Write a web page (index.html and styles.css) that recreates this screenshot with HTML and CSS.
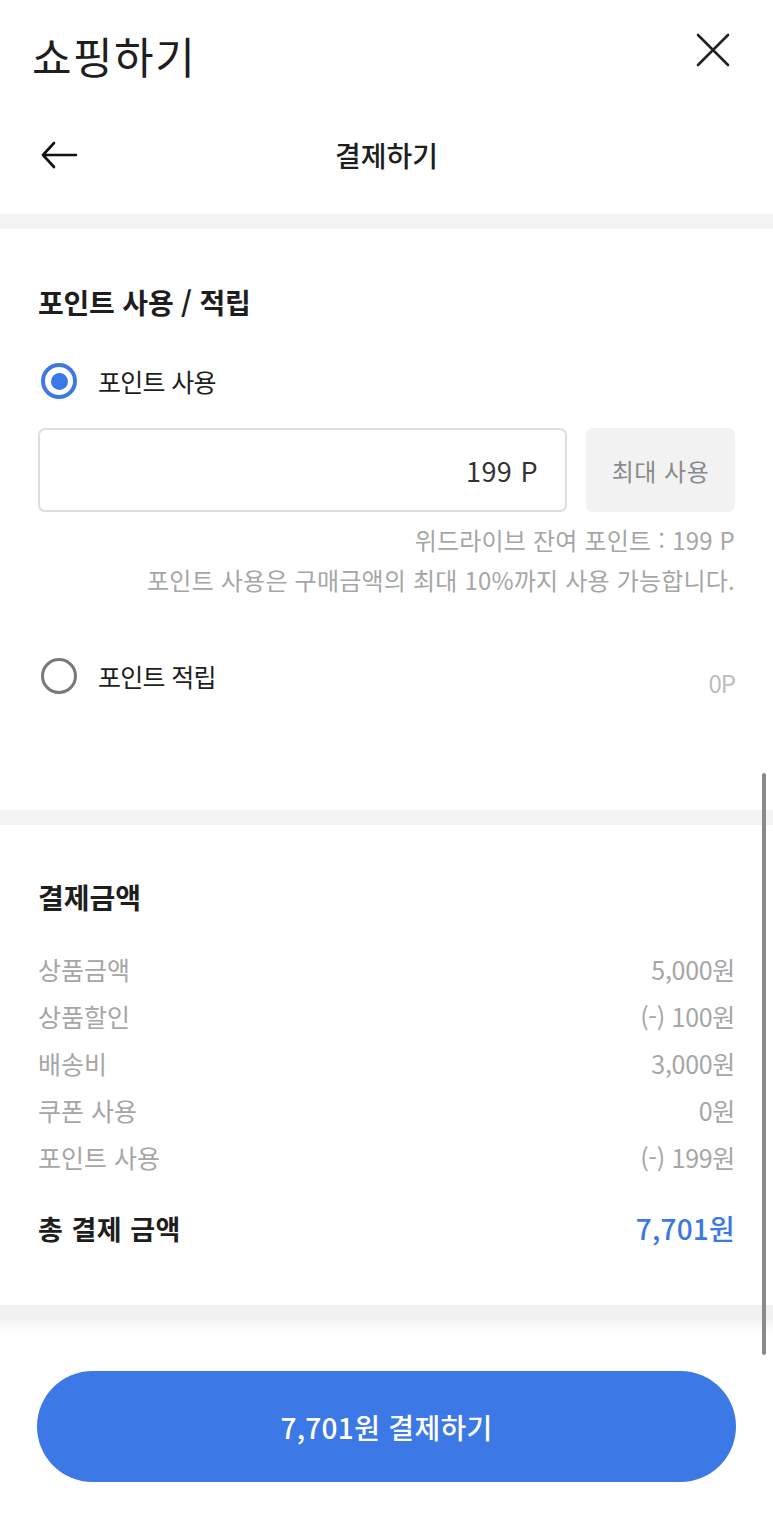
FILE: index.html
```html
<!DOCTYPE html>
<html lang="ko">
  <head>
    <meta charset="UTF-8" />
    <meta name="viewport" content="width=device-width, initial-scale=1.0" />
    <title>결제하기</title>

    <link rel="stylesheet" href="styles.css">
  </head>
  <body>
    <div class="page">
      <header class="top-bar">
        <h1 class="top-title">쇼핑하기</h1>
        <button class="icon-btn close-btn" aria-label="닫기">
          <svg width="34" height="34" viewBox="0 0 34 34">
            <path d="M2 2 L32 32 M32 2 L2 32" stroke="#222" stroke-width="2.6" stroke-linecap="round" fill="none" />
          </svg>
        </button>
      </header>

      <div class="nav-bar">
        <button class="icon-btn back-btn" aria-label="뒤로">
          <svg width="38" height="30" viewBox="0 0 38 30">
            <path d="M3 15 H36 M14 3 L3 15 L14 27" stroke="#111" stroke-width="2.6" stroke-linecap="round" stroke-linejoin="round" fill="none" />
          </svg>
        </button>
        <h2 class="nav-title">결제하기</h2>
      </div>

      <section class="block block-point">
        <h3 class="block-title">포인트 사용 / 적립</h3>

        <label class="radio-row mt-41">
          <span class="radio radio-checked"></span>
          <span class="radio-label">포인트 사용</span>
        </label>

        <div class="point-form">
          <input type="text" class="point-input" value="199 P" />
          <button class="point-btn">최대 사용</button>
        </div>

        <p class="point-note">
          위드라이브 잔여 포인트 : 199 P<br />
          포인트 사용은 구매금액의 최대 10%까지 사용 가능합니다.
        </p>

        <label class="radio-row mt-56">
          <span class="radio"></span>
          <span class="radio-label">포인트 적립</span>
          <span class="radio-value">0P</span>
        </label>
      </section>

      <section class="block block-pay">
        <h3 class="block-title">결제금액</h3>

        <ul class="pay-list">
          <li class="pay-row"><span>상품금액</span><span class="pay-value">5,000원</span></li>
          <li class="pay-row"><span>상품할인</span><span class="pay-value">(-) 100원</span></li>
          <li class="pay-row"><span>배송비</span><span class="pay-value">3,000원</span></li>
          <li class="pay-row"><span>쿠폰 사용</span><span class="pay-value">0원</span></li>
          <li class="pay-row"><span>포인트 사용</span><span class="pay-value">(-) 199원</span></li>
        </ul>

        <div class="pay-total">
          <span>총 결제 금액</span>
          <span class="pay-total-value">7,701원</span>
        </div>
      </section>

      <div class="bottom-bar">
        <button class="pay-btn">7,701원 결제하기</button>
      </div>

      <div class="scroll-thumb"></div>
    </div>
  </body>
</html>
```

FILE: styles.css
```css
:root {
  --white: #fff;
  --divider: #f4f4f4;
  --text-dark: #1e1e1e;
  --text-mid: #333;
  --text-gray: #a6a6a6;
  --text-light: #bdbdbd;
  --blue: #3c78e6;
  --input-border: #dedede;
  --btn-gray: #f2f2f2;
}

* {
  margin: 0;
  padding: 0;
  box-sizing: border-box;
}

body {
  width: 100%;
  min-height: 1520px;

  font-family: "Noto Sans CJK KR", "Noto Sans", sans-serif;
  font-size: 24px;
  font-weight: 400;

  background: var(--white);
  color: var(--text-dark);
  overflow: hidden;
}

.page {
  position: relative;
  width: 100%;
  height: 1520px;

  display: flex;
  flex-direction: column;
}

.icon-btn {
  display: flex;
  align-items: center;
  justify-content: center;

  border: none;
  background: transparent;
  cursor: pointer;
}

/* top bar */

.top-bar {
  height: 110px;

  display: flex;
  align-items: center;
  justify-content: space-between;

  padding: 0 43px 0 32px;
}

.top-title {
  font-size: 43px;
  font-weight: 400;
  letter-spacing: 1.5px;
  line-height: 1;
  color: var(--text-dark);
}

.close-btn {
  margin-top: -10px;
}

.nav-bar {
  height: 90px;

  display: grid;
  grid-template-columns: 1fr auto 1fr;
  align-items: center;

  padding: 0 38px;
  margin-bottom: 14px;
}

.back-btn {
  justify-self: start;
  margin-left: 2px;
}

.nav-title {
  font-size: 28px;
  font-weight: 500;
  letter-spacing: 0;
  color: var(--text-dark);
}

/* blocks */

.block {
  display: flex;
  flex-direction: column;

  border-top: 15px solid var(--divider);
  padding: 0 38px;
}

.block-title {
  font-size: 28px;
  font-weight: 700;
  letter-spacing: -0.2px;
  line-height: 36px;
  color: var(--text-dark);
}

.block-point {
  padding-top: 55px;
  padding-bottom: 114px;
}

.block-pay {
  padding-top: 54px;
  padding-bottom: 57px;
}

.block-pay .block-title {
  font-size: 28px;
  letter-spacing: 0;
}

.mt-41 {
  margin-top: 41px;
}

.mt-56 {
  margin-top: 56px;
}

/* radio */

.radio-row {
  height: 40px;

  display: flex;
  align-items: center;
  gap: 21px;

  cursor: pointer;
}

.radio {
  width: 36px;
  height: 36px;
  flex-shrink: 0;

  display: flex;
  align-items: center;
  justify-content: center;

  margin-left: 3px;
  border-radius: 50%;
  border: 3.5px solid #787878;
}

.radio-checked {
  border: 4px solid var(--blue);
}

.radio-checked::after {
  width: 17px;
  height: 17px;

  border-radius: 50%;
  background: var(--blue);

  content: '';
}

.radio-label {
  font-size: 25px;
  letter-spacing: -0.7px;
  color: var(--text-dark);
}

.radio-value {
  margin-left: auto;
  padding-top: 12px;

  font-size: 24px;
  letter-spacing: -1px;
  color: var(--text-light);
}

/* point form */

.point-form {
  display: flex;
  gap: 19px;

  margin-top: 27px;
}

.point-input {
  flex: 1 1;
  min-width: 0;
  height: 84px;

  padding: 0 27px;

  font-family: inherit;
  font-size: 27px;
  letter-spacing: 0.5px;
  text-align: right;
  color: var(--text-mid);

  border: 2px solid var(--input-border);
  border-radius: 7px;
  background: var(--white);
  outline: none;
}

.point-btn {
  width: 149px;
  height: 84px;

  font-family: inherit;
  font-size: 24px;
  letter-spacing: 0.5px;
  color: #8a8a8a;

  border: none;
  border-radius: 7px;
  background: var(--btn-gray);
  cursor: pointer;
}

.point-note {
  margin-top: 8px;

  font-size: 24px;
  line-height: 40px;
  letter-spacing: 0.2px;
  text-align: right;
  color: var(--text-gray);
}

/* payment summary */

.pay-list {
  list-style: none;
  margin-top: 30px;
}

.pay-row {
  height: 47px;

  display: flex;
  align-items: center;
  justify-content: space-between;

  font-size: 25px;
  letter-spacing: 0;
  color: var(--text-gray);
}

.pay-value {
  letter-spacing: -0.3px;
}

.pay-total {
  height: 40px;

  display: flex;
  align-items: center;
  justify-content: space-between;

  margin-top: 28px;

  font-size: 27px;
  font-weight: 700;
  letter-spacing: 0.5px;
  color: var(--text-dark);
}

.pay-total-value {
  font-size: 28px;
  font-weight: 500;
  letter-spacing: 0.2px;
  color: var(--blue);
}

/* bottom button */

.bottom-bar {
  flex: 1 1;

  border-top: 15px solid #f1f1f1;
  background: linear-gradient(#f5f5f5, var(--white) 14px);

  padding: 51px 37px 0;
}

.pay-btn {
  width: 100%;
  height: 111px;

  font-family: inherit;
  font-size: 28px;
  font-weight: 500;
  letter-spacing: 0.3px;
  color: var(--white);

  border: none;
  border-radius: 56px;
  background: var(--blue);
  cursor: pointer;
}

.scroll-thumb {
  position: absolute;
  top: 773px;
  right: 7px;

  width: 4px;
  height: 582px;

  border-radius: 2px;
  background: #8a8a8a;
}
```
